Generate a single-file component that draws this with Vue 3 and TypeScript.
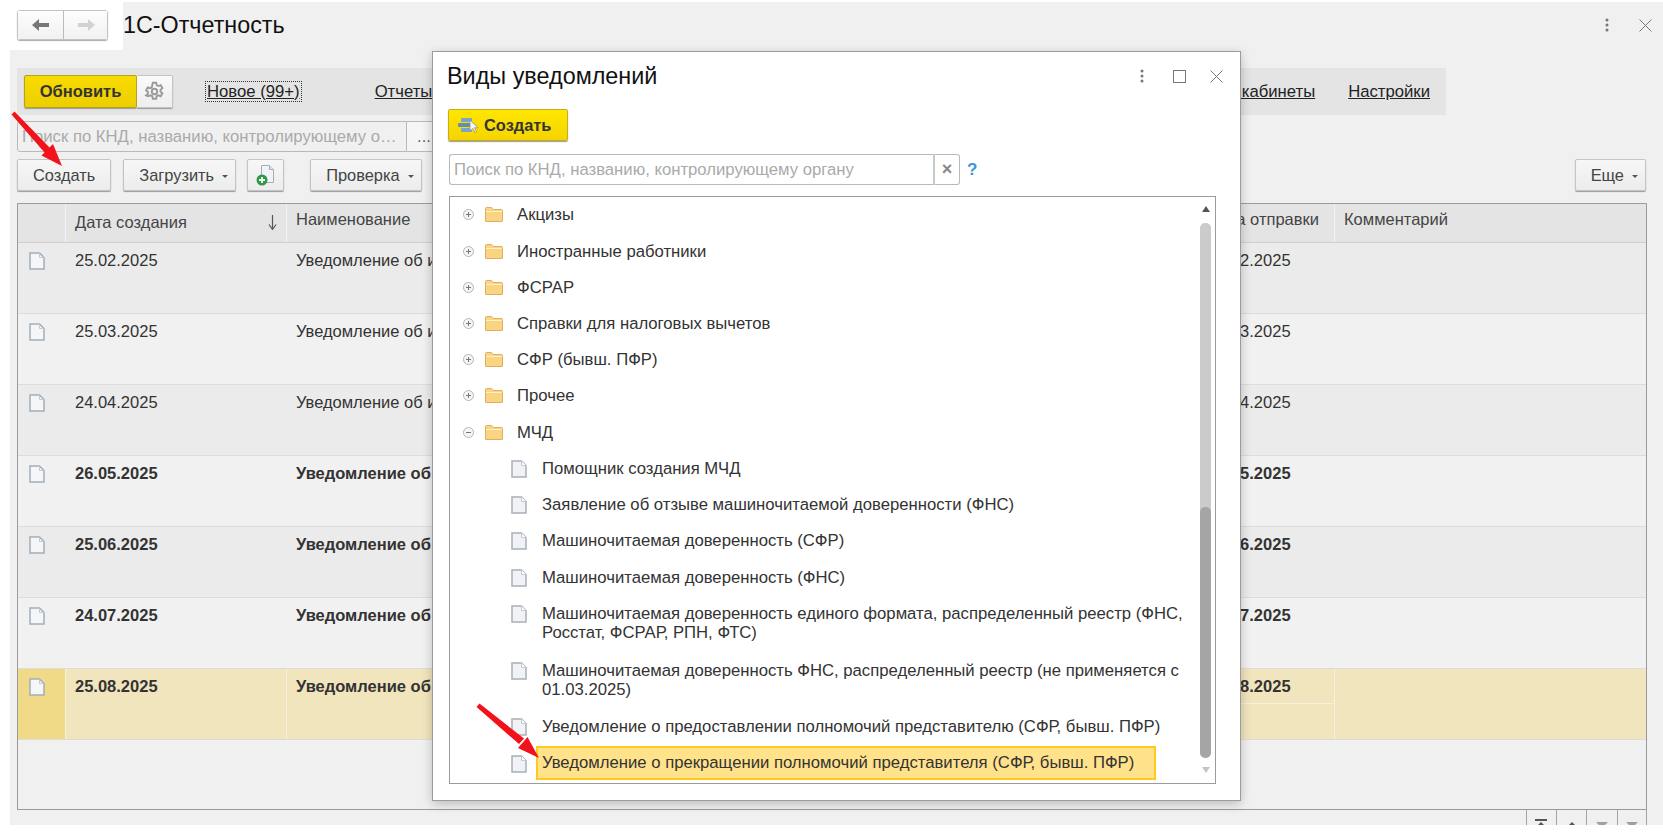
<script setup lang="ts">
interface ReportRow {
  created: string
  sent: string
  bold: boolean
  selected?: boolean
}

interface TreeRow {
  label: string
  kind: "closed" | "open" | "doc"
  double?: boolean
  selected?: boolean
}

const rows: ReportRow[] = [
  { created: "25.02.2025", sent: "25.02.2025", bold: false },
  { created: "25.03.2025", sent: "25.03.2025", bold: false },
  { created: "24.04.2025", sent: "24.04.2025", bold: false },
  { created: "26.05.2025", sent: "26.05.2025", bold: true },
  { created: "25.06.2025", sent: "25.06.2025", bold: true },
  { created: "24.07.2025", sent: "24.07.2025", bold: true },
  { created: "25.08.2025", sent: "25.08.2025", bold: true, selected: true },
]

const tree: TreeRow[] = [
  { label: "Акцизы", kind: "closed" },
  { label: "Иностранные работники", kind: "closed" },
  { label: "ФСРАР", kind: "closed" },
  { label: "Справки для налоговых вычетов", kind: "closed" },
  { label: "СФР (бывш. ПФР)", kind: "closed" },
  { label: "Прочее", kind: "closed" },
  { label: "МЧД", kind: "open" },
  { label: "Помощник создания МЧД", kind: "doc" },
  { label: "Заявление об отзыве машиночитаемой доверенности (ФНС)", kind: "doc" },
  { label: "Машиночитаемая доверенность (СФР)", kind: "doc" },
  { label: "Машиночитаемая доверенность (ФНС)", kind: "doc" },
  { label: "Машиночитаемая доверенность единого формата, распределенный реестр (ФНС, Росстат, ФСРАР, РПН, ФТС)", kind: "doc", double: true },
  { label: "Машиночитаемая доверенность ФНС, распределенный реестр (не применяется с 01.03.2025)", kind: "doc", double: true },
  { label: "Уведомление о предоставлении полномочий представителю (СФР, бывш. ПФР)", kind: "doc" },
  { label: "Уведомление о прекращении полномочий представителя (СФР, бывш. ПФР)", kind: "doc", selected: true },
]
</script>

<template>
  <div class="page">
    <header class="top">
      <div class="nav-box">
        <div class="nav">
          <button class="nav__btn nav__btn--left">
            <svg width="18" height="14" viewBox="0 0 18 14"><path d="M0 7 7 1v4h10v4H7v4z" fill="#777" /></svg>
          </button>
          <button class="nav__btn">
            <svg width="18" height="14" viewBox="0 0 18 14"><path d="M18 7 11 1v4H1v4h10v4z" fill="#d2d2d2" /></svg>
          </button>
        </div>
      </div>
      <div class="title-bar">
        <span class="title">1С-Отчетность</span>
        <svg class="title-bar__dots" width="4" height="14" viewBox="0 0 4 14"><circle cx="2" cy="2" r="1.5" /><circle cx="2" cy="7" r="1.5" /><circle cx="2" cy="12" r="1.5" /></svg>
        <svg class="title-bar__close" width="13" height="13" viewBox="0 0 13 13"><path d="M.5.5l12 12M12.5.5l-12 12" stroke="#777" fill="none" /></svg>
      </div>
    </header>

    <main class="main">
      <div class="band">
        <button class="btn-yellow btn-yellow--update">Обновить</button>
        <button class="gear">
          <svg width="21" height="21" viewBox="0 0 20 20" fill="none" stroke="#9a9a9a" stroke-width="1.8">
            <path d="M8.4 1.6h3.2l.5 2.4 1.5.8 2.3-.8 1.6 2.8-1.8 1.6v1.7l1.8 1.6-1.6 2.8-2.3-.8-1.5.8-.5 2.4H8.4l-.5-2.4-1.5-.8-2.3.8L2 13.7l1.8-1.6v-1.7L2 8.8l1.6-2.8 2.3.8 1.5-.8z" />
            <circle cx="10" cy="10" r="2.6" />
          </svg>
        </button>
        <a class="link link--focus">Новое (99+)</a>
        <a class="link link--reports">Отчеты</a>
        <a class="link link--cabinets">Личные кабинеты</a>
        <a class="link link--settings">Настройки</a>
      </div>

      <div class="filter">
        <div class="filter__input"><span>Поиск по КНД, названию, контролирующему органу</span></div>
        <button class="filter__more">...</button>
      </div>

      <div class="toolbar">
        <button class="btn">Создать</button>
        <button class="btn btn--menu">Загрузить<i class="caret" /></button>
        <button class="btn btn--icon">
          <svg width="22" height="22" viewBox="0 0 22 22">
            <path d="M6.5 1.5h8l4 4v13h-12z" fill="#f1f3f6" stroke="#a5aeb8" />
            <path d="M14.5 1.5v4h4" fill="#dfe3e8" stroke="#a5aeb8" />
            <circle cx="7" cy="16" r="5.5" fill="#2f9a46" />
            <path d="M7 13v6M4 16h6" stroke="#fff" stroke-width="1.8" />
          </svg>
        </button>
        <button class="btn btn--menu btn--check">Проверка<i class="caret" /></button>
        <button class="btn btn--menu btn--more">Еще<i class="caret" /></button>
      </div>

      <section class="table">
        <div class="row row--head">
          <div class="cell" />
          <div class="cell cell--sort">
            Дата создания
            <svg width="9" height="15" viewBox="0 0 9 15"><path d="M4.5 0v13M1 9.5l3.5 5 3.5-5" fill="none" stroke="#555" stroke-width="1.2" /></svg>
          </div>
          <div class="cell">Наименование</div>
          <div class="cell">Дата отправки</div>
          <div class="cell">Комментарий</div>
        </div>
        <div
          v-for="(row, i) in rows"
          :key="row.created"
          class="row"
          :class="{ 'row--odd': i % 2 === 0, 'row--bold': row.bold, 'row--selected': row.selected }"
        >
          <div class="cell cell--icon">
            <svg width="16" height="18" viewBox="0 0 16 18">
              <path d="M1 1h9.5L15 5.5V17H1z" fill="#f4f6f8" stroke="#a3aeb9" stroke-width="1.5" />
              <path d="M10.5 1v4.5H15" fill="none" stroke="#c3cad2" />
            </svg>
          </div>
          <div class="cell">{{ row.created }}</div>
          <div class="cell">Уведомление об исчисленных суммах налогов</div>
          <div class="cell cell--sent">{{ row.sent }}</div>
          <div class="cell" />
        </div>
      </section>

      <div class="pager">
        <button class="pager__btn"><svg width="14" height="12" viewBox="0 0 14 12"><path d="M1 0h12v2H1zM7 3l6 6H1z" fill="#555" /></svg></button>
        <button class="pager__btn"><svg width="14" height="12" viewBox="0 0 14 12"><path d="M7 3l6 6H1z" fill="#555" /></svg></button>
        <button class="pager__btn"><svg width="14" height="12" viewBox="0 0 14 12"><path d="M1 3h12L7 9z" fill="#a0a0a0" /></svg></button>
        <button class="pager__btn"><svg width="14" height="12" viewBox="0 0 14 12"><path d="M1 3h12L7 9z" fill="#a0a0a0" /></svg></button>
      </div>
    </main>

    <div class="modal">
      <div class="modal__head">
        <h2 class="modal__title">Виды уведомлений</h2>
        <svg class="modal__dots" width="4" height="14" viewBox="0 0 4 14"><circle cx="2" cy="2" r="1.5" /><circle cx="2" cy="7" r="1.5" /><circle cx="2" cy="12" r="1.5" /></svg>
        <svg class="modal__square" width="13" height="13" viewBox="0 0 13 13"><rect x=".5" y=".5" width="12" height="12" fill="none" stroke="#777" /></svg>
        <svg class="modal__close" width="13" height="13" viewBox="0 0 13 13"><path d="M.5.5l12 12M12.5.5l-12 12" stroke="#777" fill="none" /></svg>
      </div>

      <button class="btn-yellow btn-yellow--create">
        <svg width="20" height="18" viewBox="0 0 20 18">
          <rect x="3" y="2" width="11" height="4" rx="1" fill="#7ba4c8" />
          <rect x="0" y="7" width="14" height="4" rx="1" fill="#5f90ba" />
          <rect x="3" y="12" width="11" height="4" rx="1" fill="#7ba4c8" />
          <path d="M12 4v11l3-2.5 2 4 1.6-.8-2-4H20z" fill="#f4f4f4" stroke="#8a8a8a" stroke-width=".7" />
        </svg>
        Создать
      </button>

      <div class="search">
        <div class="search__input">Поиск по КНД, названию, контролирующему органу</div>
        <button class="search__clear">×</button>
        <span class="search__help">?</span>
      </div>

      <div class="tree">
        <div
          v-for="item in tree"
          :key="item.label"
          class="tree__row"
          :class="{ 'tree__row--double': item.double }"
        >
          <template v-if="item.kind !== 'doc'">
            <svg class="tree__toggle" width="11" height="11" viewBox="0 0 11 11">
              <circle cx="5.5" cy="5.5" r="5" fill="#f5f5f5" stroke="#b5b5b5" />
              <path d="M3 5.5h5" stroke="#777" />
              <path v-if="item.kind === 'closed'" d="M5.5 3v5" stroke="#777" />
            </svg>
            <svg class="tree__folder" width="18" height="15" viewBox="0 0 18 15">
              <path d="M.5 14V1.5q0-1 1-1h5l2 2h8q1 0 1 1V14q0 .5-.5.5H1q-.5 0-.5-.5z" fill="#f8d483" stroke="#e0ae5c" />
              <path d="M1 4.5h16" stroke="#fff0c4" />
            </svg>
          </template>
          <svg v-else class="tree__doc" width="16" height="18" viewBox="0 0 16 18">
            <path d="M1 1h9.5L15 5.5V17H1z" fill="#f1f2f5" stroke="#a9afb8" stroke-width="1.5" />
            <path d="M10.5 1v4.5H15" fill="#fff" stroke="#c6cad0" />
          </svg>
          <span class="tree__label" :class="{ 'tree__label--selected': item.selected }">{{ item.label }}</span>
        </div>
        <div class="scroll">
          <span class="scroll__up" />
          <div class="scroll__track"><div class="scroll__thumb" /></div>
          <span class="scroll__down" />
        </div>
      </div>
    </div>

    <svg class="arrows" width="1663" height="832" viewBox="0 0 1663 832">
      <g fill="#f2121c" stroke="none">
        <path d="M11.5 114.5 14.5 111.5 50 148 45 153z" />
        <path d="M62 166 41.5 155.5 53 144z" />
        <path d="M476.5 707 479.5 703.5 524 738.5 519 744z" />
        <path d="M539 758 518 748 527.5 737z" />
      </g>
    </svg>
  </div>
</template>

<style>
html,
body {
  margin: 0;
  background: #fff;
}
</style>

<style scoped>
.page {
  position: relative;
  width: 1663px;
  height: 832px;
  padding-top: 2px;
  box-sizing: border-box;
  overflow: hidden;
  background: #fff;
  font-family: "Liberation Sans", Arial, sans-serif;
  font-size: 16.5px;
  color: #333;
}

button {
  font: inherit;
  color: inherit;
  padding: 0;
  cursor: default;
}

/* top strip */
.top {
  display: flex;
  height: 48px;
}

.nav-box {
  width: 123px;
  padding: 8px 0 0 17px;
  box-sizing: border-box;
}

.nav {
  display: flex;
  width: 91px;
  height: 30px;
  border: 1px solid #c4c4c4;
  border-radius: 3px;
  box-sizing: border-box;
  box-shadow: 0 1px 1px #aaa;
}

.nav__btn {
  flex: 1;
  display: flex;
  align-items: center;
  justify-content: center;
  border: 0;
  background: linear-gradient(#fdfdfd, #f1f1f1);
}

.nav__btn--left {
  flex: 0 0 46px;
  border-right: 1px solid #bbb;
}

.title-bar {
  flex: 1;
  display: flex;
  align-items: center;
  background: #f0f0f0;
}

.title {
  flex: 1;
  font-size: 23.3px;
  color: #111;
  margin-top: -1px;
}

.title-bar__dots {
  fill: #777;
  margin: -2px 30px 0 0;
}

.title-bar__close {
  margin: -2px 11px 0 0;
}

/* main area */
.main {
  height: 775px;
  margin-left: 10px;
  padding: 18px 16px 0 7px;
  box-sizing: border-box;
  overflow: hidden;
  background: #f0f0f0;
}

.band {
  display: flex;
  align-items: center;
  width: 1429px;
  height: 47px;
  padding-left: 7px;
  box-sizing: border-box;
  background: #e4e4e4;
}

.btn-yellow {
  display: flex;
  align-items: center;
  box-sizing: border-box;
  font-weight: 700;
  color: #333;
  border: 1px solid #b8a21a;
  border-radius: 2px;
  background: linear-gradient(#f8dc00, #ecce00);
  box-shadow: 0 1px 1px #999;
}

.btn-yellow--update {
  justify-content: center;
  width: 113px;
  height: 33px;
}

.gear {
  display: flex;
  align-items: center;
  justify-content: center;
  width: 36px;
  height: 33px;
  border: 1px solid #c4c4c4;
  border-left: 0;
  border-radius: 0 2px 2px 0;
  background: linear-gradient(#fafafa, #eee);
  box-shadow: 0 1px 1px #999;
}

.link {
  font-size: 16.7px;
  color: #222;
  line-height: 19px;
  text-decoration: underline;
}

.link--focus {
  margin-left: 33px;
  padding: 0 1px;
  outline: 1px dotted #333;
}

.link--reports {
  margin-left: 74px;
}

.link--cabinets {
  margin-left: auto;
}

.link--settings {
  margin: 0 16px 0 33px;
}

.filter {
  display: flex;
  height: 31px;
  margin-top: 6px;
}

.filter__input {
  width: 390px;
  padding: 0 4px 0 4px;
  box-sizing: border-box;
  font-size: 16.7px;
  line-height: 29px;
  color: #aaa;
  border: 1px solid #b9b9b9;
  border-radius: 3px 0 0 3px;
  white-space: nowrap;
}

.filter__input span {
  display: block;
  overflow: hidden;
  text-overflow: ellipsis;
}

.filter__more {
  width: 35px;
  color: #666;
  border: 1px solid #b9b9b9;
  border-left: 0;
  background: #f5f5f5;
}

.toolbar {
  display: flex;
  height: 32px;
  margin-top: 7px;
}

.btn {
  display: flex;
  align-items: center;
  padding: 0 15px;
  border: 1px solid #c4c4c4;
  border-radius: 2px;
  background: linear-gradient(#f7f7f7, #ececec);
  box-shadow: 0 1px 1px #999;
  color: #444;
  font-size: 16.4px;
  white-space: nowrap;
}

.btn--menu {
  margin-left: 12px;
  padding: 0 7px 0 15px;
}

.btn--icon {
  justify-content: center;
  width: 37px;
  margin-left: 11px;
  padding: 0;
}

.btn--check {
  margin-left: 26px;
}

.btn--more {
  margin-left: auto;
  margin-right: 1px;
}

.caret {
  width: 0;
  height: 0;
  margin-left: 8px;
  margin-top: 2px;
  border: 3px solid transparent;
  border-top: 3px solid #555;
  border-bottom: 0;
}

/* table */
.table {
  height: 607px;
  margin-top: 12px;
  border: 1px solid #9b9b9b;
  box-sizing: border-box;
  overflow: hidden;
}

.row {
  display: grid;
  grid-template-columns: 47px 221px 913px 135px 1fr;
  height: 71.1px;
  box-sizing: border-box;
  border-bottom: 1.5px solid #dcdcdc;
  background: #f1f1f1;
}

.row--odd {
  background: #ebebeb;
}

.row--bold {
  font-weight: 700;
}

.row--head {
  height: 38.5px;
  border-bottom: 1.5px solid #cfcfcf;
  background: #e4e4e4;
}

.row--head .cell {
  line-height: 31px;
  padding-top: 0;
  border-left: 1px solid #f3f3f3;
  color: #444;
}

.row--head .cell:first-child {
  border-left: 0;
}

.cell {
  position: relative;
  padding: 8px 0 0 9px;
  line-height: 19px;
  white-space: nowrap;
  overflow: hidden;
  border-left: 1px solid transparent;
}

.row .cell--icon {
  padding: 9px 0 0 11px;
  border-left: 0;
}

.cell--sent {
  padding-left: 8px;
}

.cell--sort {
  display: flex;
  align-items: center;
  justify-content: space-between;
  padding-right: 9px;
}

.row--selected {
  height: 71px;
  background: #f1e5bd;
}

.row--selected .cell {
  border-left-color: #f8f1d9;
}

.row--selected .cell--icon {
  background: #f0da87;
}

.row--selected .cell--sent::after {
  content: "";
  position: absolute;
  left: 0;
  right: 0;
  top: 34px;
  border-top: 1px solid #f8f1d9;
}

.pager {
  display: flex;
  justify-content: flex-end;
  height: 30px;
}

.pager__btn {
  display: flex;
  justify-content: center;
  width: 30.3px;
  padding-top: 9px;
  border: 0;
  border-left: 1px solid #a5a5a5;
  background: transparent;
}

.pager__btn:last-child {
  border-right: 1px solid #a5a5a5;
}

/* dialog */
.modal {
  position: absolute;
  left: 432px;
  top: 51px;
  width: 809px;
  height: 750px;
  padding: 0 24px 0 14px;
  box-sizing: border-box;
  background: #fff;
  border: 1px solid #9b9b9b;
  box-shadow: 0 3px 10px rgba(0, 0, 0, 0.22);
  font-size: 16.7px;
}

.modal__head {
  display: flex;
  align-items: center;
  height: 46px;
  padding-top: 2px;
  box-sizing: border-box;
  margin-right: -16px;
}

.modal__title {
  flex: 1;
  margin: 0;
  font-size: 23.4px;
  font-weight: 400;
  color: #111;
}

.modal__dots {
  fill: #777;
  margin-right: 29px;
}

.modal__square {
  margin-right: 24px;
}

.modal__close {
  margin-right: 9px;
}

.btn-yellow--create {
  gap: 6px;
  width: 120px;
  height: 32px;
  margin: 11px 0 0 1px;
  padding-left: 9px;
  font-size: 16.4px;
  border-color: #c4ae1c;
  background: linear-gradient(#ffe600, #f5d400);
}

.search {
  display: flex;
  align-items: center;
  margin: 13px 0 0 2px;
}

.search__input {
  width: 486px;
  height: 31px;
  padding-left: 4px;
  box-sizing: border-box;
  line-height: 29px;
  color: #aaa;
  white-space: nowrap;
  border: 1px solid #b9b9b9;
  border-right: 2px solid #c8c8c8;
  border-radius: 3px 0 0 3px;
}

.search__clear {
  width: 25px;
  height: 31px;
  font-size: 18px;
  font-weight: 700;
  color: #888;
  background: #fff;
  border: 1px solid #b9b9b9;
  border-left: 0;
  border-radius: 0 3px 3px 0;
}

.search__help {
  margin-left: 7px;
  font-size: 17px;
  font-weight: 700;
  color: #3d94d6;
}

.tree {
  position: relative;
  height: 588px;
  margin: 11px 0 0 2px;
  border: 1px solid #9b9b9b;
  box-sizing: border-box;
  overflow: hidden;
}

.tree__row {
  display: flex;
  align-items: flex-start;
  padding: 8.325px 30px 8.325px 0;
  line-height: 19.6px;
}

.tree__row--double {
  padding-bottom: 9.325px;
}

.tree__toggle {
  flex: none;
  margin: 4px 0 0 13px;
}

.tree__folder {
  flex: none;
  margin: 2px 14px 0 11px;
}

.tree__doc {
  flex: none;
  margin: 1px 15px 0 61px;
}

.tree__label--selected {
  margin: -8px 0 -7px -6px;
  padding: 5.5px 20px 5.5px 4px;
  border: 2px solid #ffc91f;
  background: #ffe28a;
}

.scroll {
  position: absolute;
  top: 0;
  right: 4px;
  bottom: 0;
  width: 11px;
}

.scroll__up,
.scroll__down {
  position: absolute;
  left: 2px;
  border: 4px solid transparent;
}

.scroll__up {
  top: 9px;
  border-top: 0;
  border-bottom: 6px solid #555;
}

.scroll__down {
  bottom: 10px;
  border-bottom: 0;
  border-top: 6px solid #c4c4c4;
}

.scroll__track {
  position: absolute;
  top: 26px;
  left: 0;
  right: 0;
  height: 535px;
  border-radius: 5px;
  background: #cbcbcb;
  overflow: hidden;
}

.scroll__thumb {
  margin-top: 284px;
  height: 251px;
  border-radius: 5px;
  background: #a5a5a5;
}

.arrows {
  position: absolute;
  left: 0;
  top: 0;
  pointer-events: none;
}
</style>
